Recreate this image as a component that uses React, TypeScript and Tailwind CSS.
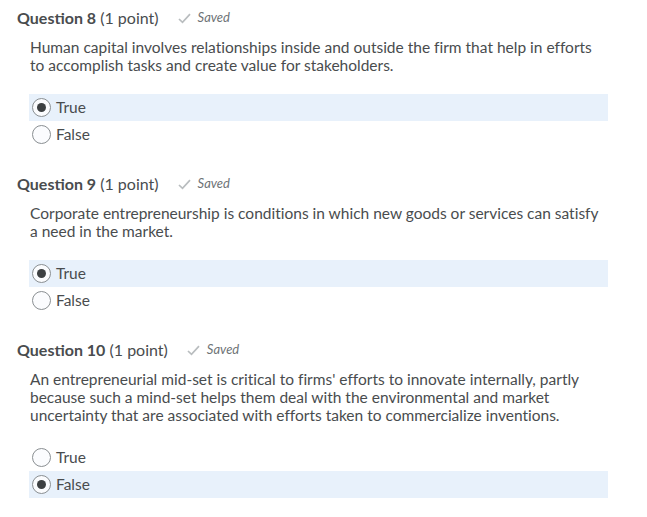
import React from 'react';

interface Question {
  number: number;
  text: string;
  answer: 'True' | 'False';
}

const questions: Question[] = [
  {
    number: 8,
    text: 'Human capital involves relationships inside and outside the firm that help in efforts to accomplish tasks and create value for stakeholders.',
    answer: 'True',
  },
  {
    number: 9,
    text: 'Corporate entrepreneurship is conditions in which new goods or services can satisfy a need in the market.',
    answer: 'True',
  },
  {
    number: 10,
    text: "An entrepreneurial mid-set is critical to firms' efforts to innovate internally, partly because such a mind-set helps them deal with the environmental and market uncertainty that are associated with efforts taken to commercialize inventions.",
    answer: 'False',
  },
];

const Radio: React.FC<{ checked: boolean }> = ({ checked }) => (
  <span className="flex h-[19px] w-[19px] items-center justify-center rounded-full border border-[#8a8f92] bg-[#fbfcfe]">
    {checked && <span className="h-[9px] w-[9px] rounded-full bg-[#3d4042]" />}
  </span>
);

const QuestionBlock: React.FC<{ q: Question }> = ({ q }) => (
  <div className="pt-2 pb-[18px]">
    <div className="flex items-center h-5 pl-[17px]">
      <span className="text-[16px] text-[#494c4e]">
        <span className="font-bold">Question {q.number}</span> (1 point)
      </span>
      <span className="ml-[19px] flex items-center gap-[7px] text-[13px] italic text-[#6e7376]">
        <svg width="13" height="11" viewBox="0 0 13 11" fill="none">
          <path d="M1 6 L4.5 9.3 L12 1.2" stroke="#b9bdbf" strokeWidth="1.7" />
        </svg>
        Saved
      </span>
    </div>
    <p className="mt-[10px] pl-[30px] pr-[40px] text-[15.5px] leading-[18px] text-[#494c4e] [font-variant-ligatures:none]">
      {q.text}
    </p>
    <div className="mt-[20px] ml-[29px] w-[579px]">
      {(['True', 'False'] as const).map(opt => (
        <div
          key={opt}
          className={`flex h-[27px] items-center gap-[5px] pl-[3px] ${q.answer === opt ? 'bg-[#e8f1fb]' : ''}`}
        >
          <Radio checked={q.answer === opt} />
          <span className="text-[15.5px] text-[#494c4e]">{opt}</span>
        </div>
      ))}
    </div>
  </div>
);

export default function App() {
  return (
    <div className="min-h-[517px] w-[647px] bg-white" style={{ fontFamily: 'Lato, sans-serif' }}>
      {questions.map(q => (
        <QuestionBlock key={q.number} q={q} />
      ))}
    </div>
  );
}
